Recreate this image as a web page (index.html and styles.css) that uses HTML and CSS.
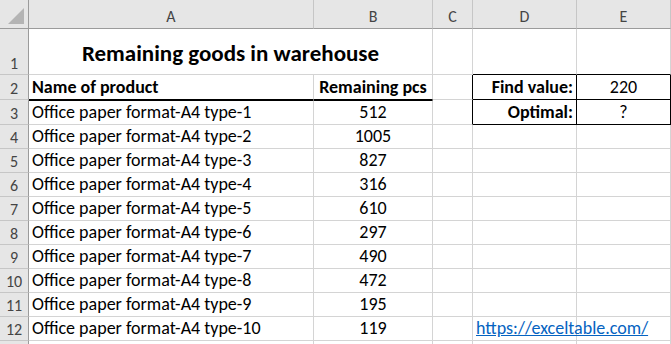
FILE: index.html
```html
<!DOCTYPE html>
<html>
<head>
    <meta charset="UTF-8">
    <link rel="stylesheet" href="styles.css">
</head>
<body>
    <div class="sheet">
        <!-- column letters -->
        <div class="corner"><span class="tri"></span></div>
        <div class="hd">A</div>
        <div class="hd">B</div>
        <div class="hd">C</div>
        <div class="hd">D</div>
        <div class="hd">E</div>

        <!-- row 1 -->
        <div class="rh r1">1</div>
        <div class="c title">Remaining goods in warehouse</div>
        <div class="c"></div>
        <div class="c box-top"></div>
        <div class="c box-top"></div>

        <!-- row 2 -->
        <div class="rh">2</div>
        <div class="c b under">Name of product</div>
        <div class="c b ctr under">Remaining pcs</div>
        <div class="c box-left"></div>
        <div class="c b rt box">Find value:</div>
        <div class="c ctr box">220</div>

        <!-- row 3 -->
        <div class="rh">3</div>
        <div class="c over">Office paper format-A4 type-1</div>
        <div class="c ctr over">512</div>
        <div class="c box-left"></div>
        <div class="c b rt box">Optimal:</div>
        <div class="c ctr box">?</div>

        <div class="rh">4</div>
        <div class="c">Office paper format-A4 type-2</div>
        <div class="c ctr">1005</div>
        <div class="c"></div><div class="c"></div><div class="c"></div>

        <div class="rh">5</div>
        <div class="c">Office paper format-A4 type-3</div>
        <div class="c ctr">827</div>
        <div class="c"></div><div class="c"></div><div class="c"></div>

        <div class="rh">6</div>
        <div class="c">Office paper format-A4 type-4</div>
        <div class="c ctr">316</div>
        <div class="c"></div><div class="c"></div><div class="c"></div>

        <div class="rh">7</div>
        <div class="c">Office paper format-A4 type-5</div>
        <div class="c ctr">610</div>
        <div class="c"></div><div class="c"></div><div class="c"></div>

        <div class="rh">8</div>
        <div class="c">Office paper format-A4 type-6</div>
        <div class="c ctr">297</div>
        <div class="c"></div><div class="c"></div><div class="c"></div>

        <div class="rh">9</div>
        <div class="c">Office paper format-A4 type-7</div>
        <div class="c ctr">490</div>
        <div class="c"></div><div class="c"></div><div class="c"></div>

        <div class="rh">10</div>
        <div class="c">Office paper format-A4 type-8</div>
        <div class="c ctr">472</div>
        <div class="c"></div><div class="c"></div><div class="c"></div>

        <div class="rh">11</div>
        <div class="c">Office paper format-A4 type-9</div>
        <div class="c ctr">195</div>
        <div class="c"></div><div class="c"></div><div class="c"></div>

        <div class="rh">12</div>
        <div class="c">Office paper format-A4 type-10</div>
        <div class="c ctr">119</div>
        <div class="c"></div>
        <div class="c link-cell"><a href="https://exceltable.com/">https://exceltable.com/</a></div>
        <div class="c"></div>

        <!-- row 13, only its top edge shows -->
        <div class="rh stub"></div>
        <div class="c stub"></div><div class="c stub"></div><div class="c stub"></div><div class="c stub"></div><div class="c stub"></div>
    </div>
</body>
</html>
```

FILE: styles.css
```css
html, body {
    margin: 0;
    background: #fff;
    overflow: hidden;
}
.sheet {
    display: grid;
    grid-template-columns: 29px 285px 119px 40px 104px 94px;
    grid-template-rows: 29px 46px 25px 25px repeat(9, 24px) 3px;
    font-family: Calibri, Carlito, Lato, "Liberation Sans", sans-serif;
    font-size: 18px;
    color: #000;
}
.sheet > div {
    box-sizing: border-box;
    min-width: 0;
    overflow: hidden;
}

/* headers */
.corner, .hd, .rh {
    background: #e6e6e6;
    color: #444;
    font-size: 16px;
    display: flex;
    justify-content: center;
}
.corner {
    position: relative;
    border-right: 1px solid #9b9b9b;
    border-bottom: 1px solid #9b9b9b;
}
.corner .tri {
    position: absolute;
    right: 4px;
    bottom: 4px;
    width: 0;
    height: 0;
    border-left: 16px solid transparent;
    border-bottom: 16px solid #b4b4b4;
}
.hd {
    align-items: center;
    padding-top: 4px;
    border-right: 1px solid #c6c6c6;
    border-bottom: 1px solid #9b9b9b;
}
.rh {
    align-items: flex-end;
    padding-bottom: 1px;
    border-right: 1px solid #9b9b9b;
    border-bottom: 1px solid #c6c6c6;
}

/* cells */
.c {
    display: flex;
    align-items: flex-end;
    padding: 0 3px 1px;
    white-space: nowrap;
    border-right: 1px solid #d4d4d4;
    border-bottom: 1px solid #d4d4d4;
}
.stub {
    padding: 0;
    border-bottom: none;
}
.b { font-weight: bold; }
.ctr { justify-content: center; }
.rt { justify-content: flex-end; }

.title {
    grid-column: span 2;
    justify-content: center;
    font-size: 23px;
    font-weight: bold;
    padding-bottom: 7px;
}

/* thick rule under the list header */
.under { border-bottom-color: #000; }
.over { border-top: 1px solid #000; }

/* framed D2:E3 block */
.box-top { border-bottom-color: #000; }
.box-left { border-right-color: #000; }
.box {
    border-right-color: #000;
    border-bottom-color: #000;
}

.sheet > .link-cell { overflow: visible; }
.link-cell a {
    color: #0563c1;
    text-decoration: underline;
}
```
